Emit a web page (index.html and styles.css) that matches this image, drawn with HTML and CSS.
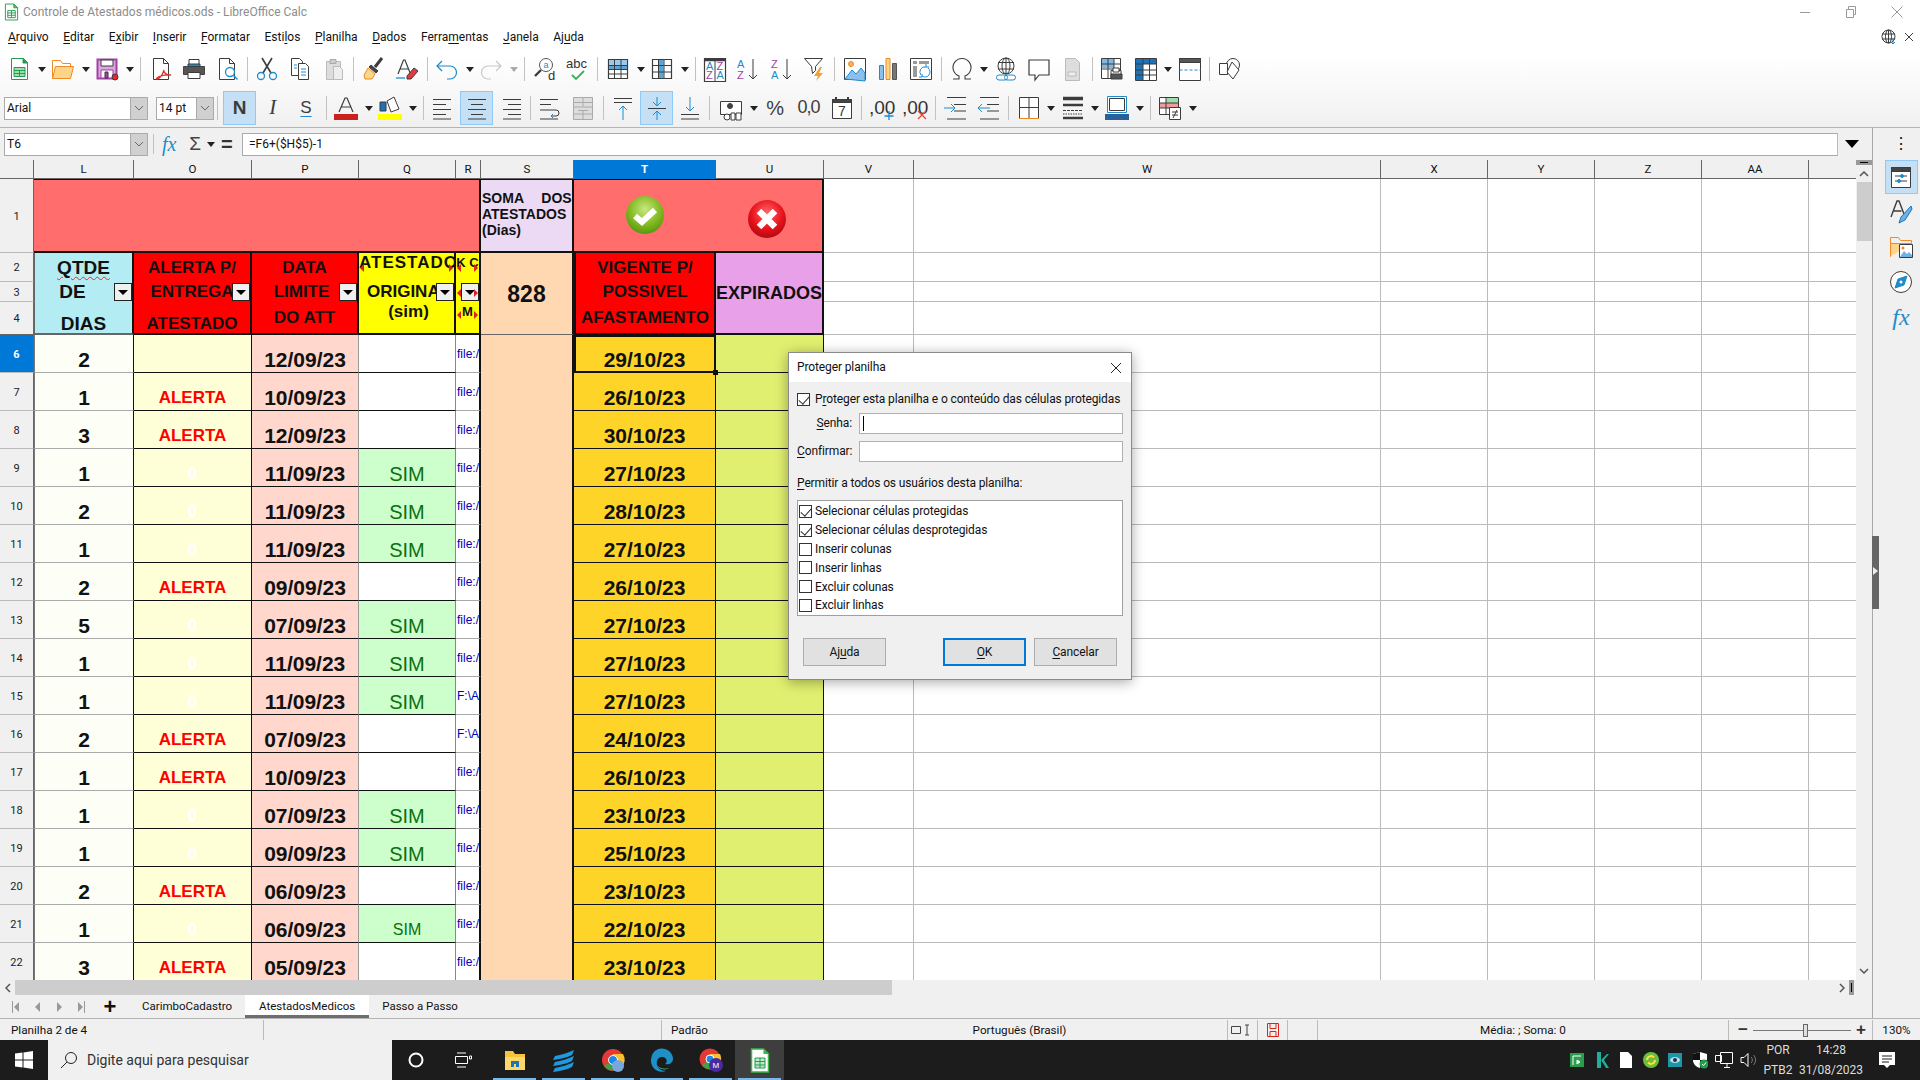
FILE: index.html
```html
<!DOCTYPE html>
<html lang="pt-BR">
<head>
<meta charset="utf-8">
<title>Controle de Atestados médicos.ods - LibreOffice Calc</title>
<link rel="stylesheet" href="styles.css">
</head>
<body>
<div class="shell">
  <header class="top">
    <div class="titlebar">
      <svg class="ic appicon" viewBox="0 0 16 18"><path d="M1.500 .5h9l4 4v13h-13z" fill="#fff" stroke="#2a9d4e"/><path d="M10.500 .5l4 4h-4z" fill="#6cc24a" stroke="#2a9d4e"/><path d="M4 7.500h8v7.500h-8zM4 10h8M4 12.500h8M8 7.500v7.500" stroke="#2a9d4e"/></svg>
      <span class="title">Controle de Atestados médicos.ods - LibreOffice Calc</span>
      <div class="winctl">
        <span class="wb"><svg class="ic" viewBox="0 0 12 12" width="12" height="12"><path d="M1 6.500h10" stroke="#999"/></svg></span>
        <span class="wb"><svg class="ic" viewBox="0 0 12 12" width="12" height="12"><path d="M1.500 3.500h7v8h-7zM3.500 3v-2.500h7v8h-2" stroke="#999"/></svg></span>
        <span class="wb"><svg class="ic" viewBox="0 0 12 12" width="12" height="12"><path d="M.5 .5l11 11M11.500 .5l-11 11" stroke="#999"/></svg></span>
      </div>
    </div>
    <div class="menubar">
      <nav class="menu">
        <span><u>A</u>rquivo</span><span><u>E</u>ditar</span><span>E<u>x</u>ibir</span><span><u>I</u>nserir</span><span><u>F</u>ormatar</span><span>Esti<u>l</u>os</span><span><u>P</u>lanilha</span><span><u>D</u>ados</span><span>Ferra<u>m</u>entas</span><span><u>J</u>anela</span><span>Aj<u>u</u>da</span>
      </nav>
      <div class="menuright">
        <svg class="ic" viewBox="0 0 16 16" width="16" height="16"><circle cx="7.500" cy="7.500" r="6.500"/><ellipse cx="7.500" cy="7.500" rx="3" ry="6.500"/><path d="M1 5h13M1 10h13M7.500 1v13"/><path d="M12 9v6M10 13l2 2 2-2" stroke="#1e8bcd"/></svg>
        <svg class="ic" viewBox="0 0 10 10" width="10" height="10"><path d="M1 1l8 8M9 1l-8 8"/></svg>
      </div>
    </div>
    <div class="tb tb1">
      <span class="b"><svg class="ic" viewBox="0 0 24 24"><path d="M4.500 1.500h12l4 4v17h-16z" fill="#fff" stroke="#1e9e4e"/><path d="M16 1.500l4.500 4.500h-4.500z" fill="#1e9e4e" stroke="#1e9e4e"/><path d="M7 10.500h11v9h-11z" fill="#9fdcae" stroke="#1e9e4e"/><path d="M7 13.500h11M7 16.500h11M12.500 13.500v6" stroke="#1e9e4e"/></svg></span><span class="dd"></span>
      <span class="b"><svg class="ic" viewBox="0 0 24 24"><path d="M1.500 21.500v-18h8l2 3h8v3" fill="#fff" stroke="#f08a24"/><path d="M1.500 21.500l3-12h18l-3 12z" fill="#fbd68a" stroke="#f08a24"/></svg></span><span class="dd"></span>
      <span class="b"><svg class="ic" viewBox="0 0 24 24"><path d="M2.500 2.500h19v19h-19z" fill="#d9a8dc" stroke="#a33fa6" stroke-width="2"/><path d="M6 3h12v6h-12z" fill="#fff"/><path d="M6 13h12v8h-12z" fill="#fff" stroke="#a33fa6"/><path d="M10 15h3v6h-3z" fill="#a33fa6"/><circle cx="20" cy="20" r="3" fill="#e8262a"/></svg></span><span class="dd"></span>
      <span class="sep"></span>
      <span class="b"><svg class="ic" viewBox="0 0 24 24"><path d="M4.500 1.500h10l5 5v16h-15z" fill="#fff"/><path d="M14.500 1.500v5h5"/><path d="M15 13c-2 6-5 9-7 9s3-5 14-4c-4 1-8-3-7-5z" stroke="#e0352b" stroke-width="1.300"/></svg></span>
      <span class="b"><svg class="ic" viewBox="0 0 24 24"><path d="M7 2.500h10v7h-10z" fill="#fff"/><path d="M1.500 9.500h21v8h-21z" fill="#555" stroke="#444"/><path d="M6 7h12v2.500h-12z" fill="#1e8bcd"/><path d="M6 15.500h12v6h-12z" fill="#fff"/></svg></span>
      <span class="b"><svg class="ic" viewBox="0 0 24 24"><path d="M4.500 1.500h10l5 5v16h-15z" fill="#fff"/><path d="M14.500 1.500v5h5"/><circle cx="15" cy="15" r="4.500" fill="#fff" stroke="#1e8bcd" stroke-width="1.300"/><path d="M18.500 18.500l4 4" stroke="#1e8bcd" stroke-width="1.500"/></svg></span>
      <span class="sep"></span>
      <span class="b"><svg class="ic" viewBox="0 0 24 24"><path d="M7 1l9 15M17 1l-9 15" stroke-width="1.600"/><circle cx="6" cy="19" r="3.500" stroke="#1e8bcd" stroke-width="1.300"/><circle cx="18" cy="19" r="3.500" stroke="#1e8bcd" stroke-width="1.300"/></svg></span>
      <span class="b"><svg class="ic" viewBox="0 0 24 24"><path d="M3.500 1.500h8l3 3v14h-11z" fill="#fff"/><path d="M10.500 6.500h7l3 3v13h-10z" fill="#fff"/><path d="M6 8h3M6 11h3M13 12h5M13 15h5M13 18h5" stroke="#1e8bcd"/></svg></span>
      <span class="b"><svg class="ic" viewBox="0 0 24 24"><path d="M4.500 4.500h14v18h-14z" fill="#ddd" stroke="#bbb"/><path d="M8 2.500h6v4h-6z" fill="#ccc" stroke="#aaa"/><path d="M11.500 9.500h6l3 3v10h-9z" fill="#eee" stroke="#bbb"/></svg></span>
      <span class="sep"></span>
      <span class="b"><svg class="ic" viewBox="0 0 24 24"><path d="M20 1L13 10" stroke-width="3"/><path d="M9 8l7 6-2 2-7-6z" fill="#444"/><path d="M6 11l7 6-3 5H3l-1-4z" fill="#fbd68a" stroke="#f08a24"/></svg></span>
      <span class="b"><svg class="ic" viewBox="0 0 24 24"><path d="M3 17L8.500 3h1.500l5.500 14M5.500 12h8" stroke-width="1.200"/><path d="M1 21h9" stroke="#1e8bcd" stroke-width="1.300"/><path d="M12 19l7-8 4 3-7 8h-4z" fill="#e8363a"/></svg></span>
      <span class="sep"></span>
      <span class="b"><svg class="ic" viewBox="0 0 24 24"><path d="M7 4L2 9l5 5M2 9h13a6 6 0 010 13h-3" stroke="#1e8bcd" stroke-width="1.200"/></svg></span><span class="dd"></span>
      <span class="b"><svg class="ic" viewBox="0 0 24 24"><path d="M17 4l5 5-5 5M22 9H9a6 6 0 000 13h3" stroke="#c8c8c8" stroke-width="1.200"/></svg></span><span class="dd off"></span>
      <span class="sep"></span>
      <span class="b"><svg class="ic" viewBox="0 0 24 24"><circle cx="13" cy="8" r="6.500" fill="#fff" stroke="#555"/><path d="M8 13l-6 6" stroke-width="2.400"/><text x="10.500" y="11" class="ti">a</text><text x="15" y="23" class="td">d</text></svg></span>
      <span class="b"><svg class="ic" viewBox="0 0 24 24"><text x="0" y="11" class="tabc">abc</text><path d="M6 18l4 4 8-8" stroke="#3fae5a" stroke-width="1.800"/></svg></span>
      <span class="sep"></span>
      <span class="b"><svg class="ic" viewBox="0 0 24 24"><path d="M2.500 2.500h19v19h-19z" fill="#fff" stroke-width="1.200"/><path d="M3 8.500h18v4h-18z" fill="#5aa5dc" stroke="none"/><path d="M3 3h18v5h-18z" fill="#9cc9eb" stroke="none"/><path d="M2.500 8.500h19M2.500 12.500h19M2.500 17h19M8.500 2.500v19M15 2.500v19"/></svg></span><span class="dd"></span>
      <span class="b"><svg class="ic" viewBox="0 0 24 24"><path d="M2.500 2.500h19v19h-19z" fill="#fff" stroke-width="1.200"/><path d="M8.500 3h5v18h-5z" fill="#5aa5dc" stroke="none"/><path d="M2.500 8.500h19M2.500 15h19M8.500 2.500v19M14 2.500v19"/></svg></span><span class="dd"></span>
      <span class="sep"></span>
      <span class="b"><svg class="ic" viewBox="0 0 24 24"><path d="M1.500 1.500h21v23h-21z" fill="#fff" stroke-width="1.200"/><path d="M1.500 3h21" stroke-width="2.500"/><path d="M12 4v20"/><text x="3" y="13" class="ta bl">A</text><text x="13.500" y="13" class="ta pu">Z</text><text x="3" y="22" class="ta pu">Z</text><text x="13.500" y="22" class="ta bl">A</text></svg></span>
      <span class="b"><svg class="ic" viewBox="0 0 24 24"><text x="1" y="11" class="ta bl">A</text><text x="1" y="22" class="ta pu">Z</text><path d="M17 2v20M13 18l4 4 4-4"/></svg></span>
      <span class="b"><svg class="ic" viewBox="0 0 24 24"><text x="1" y="11" class="ta pu">Z</text><text x="1" y="22" class="ta bl">A</text><path d="M17 2v20M13 18l4 4 4-4"/></svg></span>
      <span class="b"><svg class="ic" viewBox="0 0 24 24"><path d="M1.500 1.500h18l-7 8v4l-3 3-1-7z" fill="#fff"/><path d="M17 10l-6 9h4l-2 5 7-8h-4l3-6z" fill="#f0a030" stroke="none"/></svg></span>
      <span class="sep"></span>
      <span class="b"><svg class="ic" viewBox="0 0 24 24"><path d="M1.500 1.500h21v21h-21z" fill="#fff"/><path d="M2 22l7-9 4 4 5-6 4 5v8z" fill="#8cc0ec" stroke="#1e8bcd"/><circle cx="8" cy="7" r="2.500" fill="#f8b05a" stroke="#f08a24"/></svg></span>
      <span class="b"><svg class="ic" viewBox="0 0 24 24"><path d="M3.500 8.500h4v14h-4z" fill="#8cc0ec" stroke="#1e8bcd"/><path d="M10 1.500h4v21h-4z" fill="#fbd68a" stroke="#f08a24"/><path d="M16.500 6.500h4v16h-4z" fill="#777" stroke="#555"/></svg></span>
      <span class="b"><svg class="ic" viewBox="0 0 24 24"><path d="M1.500 1.500h21v21h-21z" fill="#fff"/><path d="M4 4h4v3h-4zM10 4h10v3h-10zM4 9h4v11h-4z" fill="#999" stroke="none"/><path d="M12 18a5 5 0 015-8M19 11a5 5 0 01-6 8M17 7v3h3M10 20h3v-3" stroke="#1e8bcd"/></svg></span>
      <span class="sep"></span>
      <span class="b"><svg class="ic" viewBox="0 0 24 24"><path d="M3 23h6v-3a9 9 0 116 0v3h6" stroke-width="1.100" transform="translate(0 -1)"/></svg></span><span class="dd"></span>
      <span class="b"><svg class="ic" viewBox="0 0 24 24"><circle cx="12" cy="9" r="8"/><ellipse cx="12" cy="9" rx="4" ry="8"/><path d="M4 5.500h16M4 12h16M12 1v16" stroke-width="1"/><path d="M5 19.500h6a2.500 2.500 0 010 5h-6a2.500 2.500 0 010-5zM13 19.500h6a2.500 2.500 0 010 5h-6a2.500 2.500 0 010-5z" stroke="#1e8bcd" fill="#fff" transform="translate(0 -1.500)"/></svg></span>
      <span class="b"><svg class="ic" viewBox="0 0 24 24"><path d="M2 3h20v15h-10l-4 5v-5h-6z" fill="#fff" stroke-width="1.200"/></svg></span>
      <span class="b"><svg class="ic" viewBox="0 0 24 24"><path d="M5.500 1.500h10l4 4v18h-14z" fill="#ddd" stroke="#bbb"/><path d="M8 15h8v4h-8z" fill="#eee" stroke="#bbb"/></svg></span>
      <span class="sep"></span>
      <span class="b"><svg class="ic" viewBox="0 0 24 24"><path d="M1.500 1.500h19v20h-19z" fill="#fff"/><path d="M2 2h12v9h-12z" fill="#7db8e6" stroke="none"/><path d="M1.500 7h19M1.500 12h19M8 1.500v20M14 1.500v20"/><path d="M11 13.500h10v8h-10z" fill="#fff"/><path d="M13 11h6v4h-6z" fill="#fff"/><path d="M11 17h11v5h-11z" fill="#555"/></svg></span>
      <span class="b"><svg class="ic" viewBox="0 0 24 24"><path d="M1.500 1.500h21v22h-21z" fill="#fff"/><path d="M2 2h7v21h-7zM9 2h13v5h-13z" fill="#1e72b8" stroke="none"/><path d="M1.500 7h21M1.500 13h21M1.500 18h21M9 1.500v22M15.500 1.500v22"/></svg></span><span class="dd"></span>
      <span class="b"><svg class="ic" viewBox="0 0 24 24"><path d="M1.500 1.500h21v22h-21z" fill="#fff"/><path d="M1.500 1.500h21v4h-21z" fill="#555"/><path d="M1.500 13h21" stroke="#1e8bcd" stroke-dasharray="3 2"/></svg></span>
      <span class="sep"></span>
      <span class="b"><svg class="ic" viewBox="0 0 24 24"><circle cx="15" cy="8" r="6.500"/><path d="M1.500 6.500h8v11h-8z" fill="#fff"/><path d="M14 5l7 8-6 9-6-7z" fill="#fff"/></svg></span>
    </div>
    <div class="tb tb2">
      <div class="combo font"><span class="val">Arial</span><span class="cbtn"><svg viewBox="0 0 10 6" width="10" height="6"><path d="M1 1l4 4 4-4" fill="none" stroke="#666"/></svg></span></div>
      <div class="combo size"><span class="val">14 pt</span><span class="cbtn"><svg viewBox="0 0 10 6" width="10" height="6"><path d="M1 1l4 4 4-4" fill="none" stroke="#666"/></svg></span></div>
      <span class="sep sep-n"></span>
      <span class="b on glyph bold">N</span>
      <span class="b glyph ital">I</span>
      <span class="b glyph under">S</span>
      <span class="sep"></span>
      <span class="b"><svg class="ic" viewBox="0 0 24 24"><path d="M5 16L11 2h2l6 14M7.500 11h9" stroke-width="1.200"/><path d="M0 18h24v6h-24z" fill="#c9211e" stroke="none"/></svg></span><span class="dd"></span>
      <span class="b"><svg class="ic" viewBox="0 0 24 24"><path d="M2 6h6v9h-6z" fill="#1e72b8"/><path d="M9 5l7-4 5 12-8 3z" fill="#fff"/><path d="M0 18h24v6h-24z" fill="#ffff00" stroke="none"/></svg></span><span class="dd"></span>
      <span class="sep"></span>
      <span class="b"><svg class="ic" viewBox="0 0 24 24"><path d="M1 3.500h18M1 8.500h13M1 13.500h18M1 18.500h13M1 23h18"/></svg></span>
      <span class="b on"><svg class="ic" viewBox="0 0 24 24"><path d="M3 3.500h18M6 8.500h12M3 13.500h18M6 18.500h12M3 23h18"/></svg></span>
      <span class="b"><svg class="ic" viewBox="0 0 24 24"><path d="M5 3.500h18M10 8.500h13M5 13.500h18M10 18.500h13M5 23h18"/></svg></span>
      <span class="sep"></span>
      <span class="b"><svg class="ic" viewBox="0 0 24 24"><path d="M2 3.500h18M2 8.500h11M2 23h18M2 14h16a3 3 0 010 6h-5" /><path d="M15 18l-2 2 2 2" stroke="#1e8bcd"/></svg></span>
      <span class="b"><svg class="ic" viewBox="0 0 24 24"><path d="M2.500 1.500h19v22h-19z" fill="#ddd" stroke="#aaa"/><path d="M2.500 6.500h19M2.500 11h19M2.500 18h19M12 1.500v9M12 14v9M7 14.500h10" stroke="#aaa"/></svg></span>
      <span class="sep"></span>
      <span class="b"><svg class="ic" viewBox="0 0 24 24"><path d="M3 2.500h18M3 6.500h18"/><path d="M12 10v14M8 14l4-4 4 4" stroke="#1e8bcd"/></svg></span>
      <span class="b on"><svg class="ic" viewBox="0 0 24 24"><path d="M3 12.500h18"/><path d="M12 1v9M8 6l4 4 4-4M12 24v-9M8 19l4-4 4 4" stroke="#1e8bcd"/></svg></span>
      <span class="b"><svg class="ic" viewBox="0 0 24 24"><path d="M3 18.500h18M3 23h18"/><path d="M12 1v14M8 11l4 4 4-4" stroke="#1e8bcd"/></svg></span>
      <span class="sep sep-c"></span>
      <span class="b"><svg class="ic" viewBox="0 0 24 24"><path d="M1.500 5.500h21v13h-21z" fill="#fff"/><circle cx="11" cy="10" r="2.500" fill="#444"/><circle cx="8" cy="21" r="3" fill="#fff"/><path d="M12 17h4v7h-4zM17 17h5v7h-5z" fill="#fff"/></svg></span><span class="dd"></span>
      <span class="b glyph pct">%</span>
      <span class="b glyph num">0,0</span>
      <span class="b"><svg class="ic" viewBox="0 0 24 24"><path d="M2.500 3.500h19v19h-19z" fill="#fff"/><path d="M2.500 3.500h19v3h-19z" fill="#444"/><path d="M6 1v3M18 1v3" stroke-width="2"/><text x="8" y="20" class="t7">7</text></svg></span>
      <span class="sep"></span>
      <span class="b wide"><svg class="ic" viewBox="0 0 26 24"><text x="0" y="18" class="tnum">,00</text><path d="M20 15v9M15.500 20h9" stroke="#1e8bcd" stroke-width="1.300"/></svg></span>
      <span class="b wide"><svg class="ic" viewBox="0 0 26 24"><text x="0" y="18" class="tnum">,00</text><path d="M16 15l8 8M24 15l-8 8" stroke="#e8453a" stroke-width="1.300"/></svg></span>
      <span class="sep"></span>
      <span class="b"><svg class="ic" viewBox="0 0 24 24"><path d="M4 1.500h19M11 8.500h12M11 15h12M4 23h19"/><path d="M1 12h11M8 8l4 4-4 4" stroke="#1e8bcd"/></svg></span>
      <span class="b"><svg class="ic" viewBox="0 0 24 24"><path d="M4 1.500h19M11 8.500h12M11 15h12M4 23h19"/><path d="M13 12h-11M5 8l-4 4 4 4" stroke="#1e8bcd" transform="translate(1 0)"/></svg></span>
      <span class="sep"></span>
      <span class="b"><svg class="ic" viewBox="0 0 24 24"><path d="M2.500 1.500h19v21h-19z" fill="#fff"/><path d="M2.500 11.500h19M12 1.500v21"/><path d="M2 22.500h20" stroke="#f08a24"/></svg></span><span class="dd"></span>
      <span class="b"><svg class="ic" viewBox="0 0 24 24"><path d="M2 2.500h20" stroke-width="3.500"/><path d="M2 9h20" stroke-width="2.500"/><path d="M2 14.500h20" stroke-dasharray="3 1"/><path d="M2 18h20" stroke-dasharray="1.500 1"/><path d="M2 22h20" stroke-width="2.500"/></svg></span><span class="dd"></span>
      <span class="b"><svg class="ic" viewBox="0 0 24 24"><path d="M2.500 .5h19v16h-19z" fill="#fff" stroke="#1e8bcd"/><path d="M4.500 2.500h15v12h-15z"/><path d="M0 18h24v6h-24z" fill="#2a6099" stroke="none"/></svg></span><span class="dd"></span>
      <span class="sep"></span>
      <span class="b"><svg class="ic" viewBox="0 0 24 24"><path d="M1.500 1.500h19v17h-19z" fill="#fff"/><path d="M8 2h12v5h-12z" fill="#9fdcae" stroke="none"/><path d="M8 7h12v5h-12z" fill="#f39a9a" stroke="none"/><path d="M2 7h6v5h-6z" fill="#f39a9a" stroke="none"/><path d="M1.500 7h19M1.500 12h19M8 1.500v17"/><path d="M11.500 11.500h11v12h-11z" fill="#fff"/><path d="M14 16h6M14 19h6M19 14l-4 8"/></svg></span><span class="dd"></span>
    </div>
  </header>

  <div class="work">
    <div class="main">
      <div class="fbar">
        <div class="combo name"><span class="val">T6</span><span class="cbtn"><svg viewBox="0 0 10 6" width="10" height="6"><path d="M1 1l4 4 4-4" fill="none" stroke="#666"/></svg></span></div>
        <span class="sep fsep"></span>
        <span class="fx">fx</span>
        <span class="sigma">Σ</span>
        <span class="dd fdd"></span>
        <span class="eq">=</span>
        <div class="finput">=F6+($H$5)-1</div>
        <span class="fdrop"></span>
      </div>
      <div class="sheetrow">
        <div class="sheet">
          <div class="corner"></div><div class="ch">L</div><div class="ch">O</div><div class="ch">P</div><div class="ch">Q</div><div class="ch">R</div><div class="ch">S</div><div class="ch act">T</div><div class="ch">U</div><div class="ch">V</div><div class="ch">W</div><div class="ch">X</div><div class="ch">Y</div><div class="ch">Z</div><div class="ch">AA</div><div class="ch last"></div>

          <div class="rh">1</div>
          <div class="h1a"></div>
          <div class="h1s"><span>SOMA DOS</span> ATESTADOS (Dias)</div>
          <div class="h1t">
            <svg class="ball okb" viewBox="0 0 40 40"><defs><radialGradient id="gg" cx=".5" cy=".35" r=".7"><stop offset="0" stop-color="#c9e880"/><stop offset=".6" stop-color="#7fb81e"/><stop offset="1" stop-color="#4f8f10"/></radialGradient></defs><circle cx="20" cy="20" r="19" fill="url(#gg)"/><path d="M10 21l7 6 13-12" fill="none" stroke="#fff" stroke-width="6"/></svg>
            <svg class="ball nob" viewBox="0 0 40 40"><defs><radialGradient id="gr" cx=".5" cy=".35" r=".7"><stop offset="0" stop-color="#ff6a6a"/><stop offset=".6" stop-color="#e8101a"/><stop offset="1" stop-color="#a40a10"/></radialGradient></defs><circle cx="20" cy="20" r="19" fill="url(#gr)"/><path d="M12 12l16 16M28 12l-16 16" fill="none" stroke="#fff" stroke-width="6.500"/></svg>
          </div>
          <div class="blank"></div>

          <div class="rh">2</div>
          <div class="hd hl"><span class="ln wavy">QTDE</span><span class="ln sh-l">DE</span><span class="ln end">DIAS</span><i class="af"></i></div>
          <div class="hd hr"><span class="ln">ALERTA P/</span><span class="ln">ENTREGA</span><span class="ln end">ATESTADO</span><i class="af"></i></div>
          <div class="hd hr"><span class="ln">DATA</span><span class="ln sh-l2">LIMITE</span><span class="ln">DO ATT</span><i class="af"></i></div>
          <div class="hd hy"><span class="ln up wide-l">ATESTADO</span><span class="ln">ORIGINAL</span><span class="ln up2">(sim)</span><i class="af"></i><i class="tl t1"></i><i class="tr t1"></i></div>
          <div class="hd hy hs"><span class="ln up">K C</span><span class="ln">st</span><span class="ln up2">M</span><i class="af"></i><i class="tl t1"></i><i class="tr t1"></i><i class="tl t2"></i><i class="tr t2"></i><i class="tl t3"></i><i class="tr t3"></i></div>
          <div class="h828">828</div>
          <div class="hd hr ht"><span class="ln">VIGENTE P/</span><span class="ln">POSSIVEL</span><span class="ln">AFASTAMENTO</span></div>
          <div class="hexp">EXPIRADOS</div>
          <div class="blank"></div>
          <div class="rh">3</div><div class="blank"></div>
          <div class="rh rh4">4</div><div class="blank"></div>

          <div class="rh act">6</div><div class="c l">2</div><div class="c o"></div><div class="c p">12/09/23</div><div class="c q"></div><div class="c r">file:/</div><div class="smerge"></div><div class="c t cur">29/10/23<i class="handle"></i></div><div class="c u"></div><div class="blank"></div>
          <div class="rh">7</div><div class="c l">1</div><div class="c o">ALERTA</div><div class="c p">10/09/23</div><div class="c q"></div><div class="c r">file:/</div><div class="c t">26/10/23</div><div class="c u"></div><div class="blank"></div>
          <div class="rh">8</div><div class="c l">3</div><div class="c o">ALERTA</div><div class="c p">12/09/23</div><div class="c q"></div><div class="c r">file:/</div><div class="c t">30/10/23</div><div class="c u"></div><div class="blank"></div>
          <div class="rh">9</div><div class="c l">1</div><div class="c o z">0</div><div class="c p">11/09/23</div><div class="c q s">SIM</div><div class="c r">file:/</div><div class="c t">27/10/23</div><div class="c u"></div><div class="blank"></div>
          <div class="rh">10</div><div class="c l">2</div><div class="c o z">0</div><div class="c p">11/09/23</div><div class="c q s">SIM</div><div class="c r">file:/</div><div class="c t">28/10/23</div><div class="c u"></div><div class="blank"></div>
          <div class="rh">11</div><div class="c l">1</div><div class="c o z">0</div><div class="c p">11/09/23</div><div class="c q s">SIM</div><div class="c r">file:/</div><div class="c t">27/10/23</div><div class="c u"></div><div class="blank"></div>
          <div class="rh">12</div><div class="c l">2</div><div class="c o">ALERTA</div><div class="c p">09/09/23</div><div class="c q"></div><div class="c r">file:/</div><div class="c t">26/10/23</div><div class="c u"></div><div class="blank"></div>
          <div class="rh">13</div><div class="c l">5</div><div class="c o z">0</div><div class="c p">07/09/23</div><div class="c q s">SIM</div><div class="c r">file:/</div><div class="c t">27/10/23</div><div class="c u"></div><div class="blank"></div>
          <div class="rh">14</div><div class="c l">1</div><div class="c o z">0</div><div class="c p">11/09/23</div><div class="c q s">SIM</div><div class="c r">file:/</div><div class="c t">27/10/23</div><div class="c u"></div><div class="blank"></div>
          <div class="rh">15</div><div class="c l">1</div><div class="c o z">0</div><div class="c p">11/09/23</div><div class="c q s">SIM</div><div class="c r">F:\A</div><div class="c t">27/10/23</div><div class="c u"></div><div class="blank"></div>
          <div class="rh">16</div><div class="c l">2</div><div class="c o">ALERTA</div><div class="c p">07/09/23</div><div class="c q"></div><div class="c r">F:\A</div><div class="c t">24/10/23</div><div class="c u"></div><div class="blank"></div>
          <div class="rh">17</div><div class="c l">1</div><div class="c o">ALERTA</div><div class="c p">10/09/23</div><div class="c q"></div><div class="c r">file:/</div><div class="c t">26/10/23</div><div class="c u"></div><div class="blank"></div>
          <div class="rh">18</div><div class="c l">1</div><div class="c o z">0</div><div class="c p">07/09/23</div><div class="c q s">SIM</div><div class="c r">file:/</div><div class="c t">23/10/23</div><div class="c u"></div><div class="blank"></div>
          <div class="rh">19</div><div class="c l">1</div><div class="c o z">0</div><div class="c p">09/09/23</div><div class="c q s">SIM</div><div class="c r">file:/</div><div class="c t">25/10/23</div><div class="c u"></div><div class="blank"></div>
          <div class="rh">20</div><div class="c l">2</div><div class="c o">ALERTA</div><div class="c p">06/09/23</div><div class="c q"></div><div class="c r">file:/</div><div class="c t">23/10/23</div><div class="c u"></div><div class="blank"></div>
          <div class="rh">21</div><div class="c l">1</div><div class="c o z">0</div><div class="c p">06/09/23</div><div class="c q s small">SIM</div><div class="c r">file:/</div><div class="c t">22/10/23</div><div class="c u"></div><div class="blank"></div>
          <div class="rh">22</div><div class="c l">3</div><div class="c o">ALERTA</div><div class="c p">05/09/23</div><div class="c q"></div><div class="c r">file:/</div><div class="c t">23/10/23</div><div class="c u"></div><div class="blank"></div>
        </div>
        <div class="vscroll">
          <span class="mark"></span>
          <svg class="arrow" viewBox="0 0 10 6" width="10" height="6"><path d="M1 5l4-4 4 4" fill="none" stroke="#555" stroke-width="1.500"/></svg>
          <span class="vthumb"></span>
          <svg class="arrow vdown" viewBox="0 0 10 6" width="10" height="6"><path d="M1 1l4 4 4-4" fill="none" stroke="#555" stroke-width="1.500"/></svg>
        </div>
      </div>
      <div class="hscroll">
        <svg class="arrowh" viewBox="0 0 6 10" width="6" height="10"><path d="M5 1l-4 4 4 4" fill="none" stroke="#555" stroke-width="1.500"/></svg>
        <span class="hthumb"></span>
        <svg class="arrowh hright" viewBox="0 0 6 10" width="6" height="10"><path d="M1 1l4 4-4 4" fill="none" stroke="#555" stroke-width="1.500"/></svg>
        <span class="hmark"></span>
      </div>
      <div class="tabs">
        <span class="nav"><i class="bar"></i><i class="tri-l"></i></span>
        <span class="nav"><i class="tri-l"></i></span>
        <span class="nav"><i class="tri-r"></i></span>
        <span class="nav"><i class="tri-r"></i><i class="bar"></i></span>
        <span class="plus">+</span>
        <span class="tab">CarimboCadastro</span>
        <span class="tab sel">AtestadosMedicos</span>
        <span class="tab">Passo a Passo</span>
      </div>
    </div>
    <aside class="side">
      <span class="kebab">⋮</span>
      <span class="sb on"><svg class="ic" viewBox="0 0 24 24"><path d="M2.500 2.500h19v20h-19z" fill="#fff"/><path d="M2.500 2.500h19v4h-19z" fill="#444"/><path d="M6 11h12M6 16h12" /><circle cx="13" cy="11" r="1.500" fill="#1e8bcd" stroke="#1e8bcd"/><circle cx="10" cy="16" r="1.500" fill="#1e8bcd" stroke="#1e8bcd"/></svg></span>
      <span class="sb"><svg class="ic" viewBox="0 0 24 24"><path d="M2 17L8 1h2l5 13M4.500 11h8" stroke-width="1.400"/><path d="M22 6L12 17l-2 6 6-3L23 9z" fill="#6cb2e8" stroke="#1e72b8"/></svg></span>
      <span class="sb"><svg class="ic" viewBox="0 0 24 24"><path d="M1.500 21.500v-19h8l2 3h11v3" stroke="#f08a24"/><path d="M1.500 21.500v-13h21" fill="#fbd68a" stroke="#f08a24"/><path d="M10.500 9.500h13v13h-13z" fill="#fff"/><path d="M11 22l4-6 3 3 2-2 3 3v2z" fill="#6cb2e8" stroke="none"/><circle cx="14" cy="13" r="1.500" fill="#f08a24" stroke="none"/></svg></span>
      <span class="sb"><svg class="ic" viewBox="0 0 24 24"><circle cx="12" cy="12" r="10.500" fill="#fff"/><path d="M18 6l-3 9-9 3 3-9z" fill="#1e8bcd" stroke="#1e8bcd"/><circle cx="12" cy="12" r="1.500" fill="#fff" stroke="none"/></svg></span>
      <span class="sb fxs">fx</span>
      <i class="grip"></i>
    </aside>
  </div>

  <footer class="status">
    <span class="st st1">Planilha 2 de 4</span>
    <span class="st st1b"></span>
    <span class="st st2">Padrão</span>
    <span class="st st3">Português (Brasil)</span>
    <span class="st st4"><svg class="ic" viewBox="0 0 24 12" width="24" height="12"><path d="M.5 2.500h9v7h-9zM14 1h4M16 1v10M14 11h4" stroke="#444"/></svg></span>
    <span class="st st5"><svg class="ic" viewBox="0 0 12 14" width="12" height="14"><path d="M.5 .5h11v13h-11z" stroke="#d8261e"/><path d="M3 .5v5h6v-5M3 13.500v-5h6v5" stroke="#d8261e"/></svg></span>
    <span class="st st6"></span>
    <span class="st st7">Média: ; Soma: 0</span>
    <span class="st st8"><span class="zm">−</span><span class="slider"><i></i></span><span class="zm">+</span></span>
    <span class="st st9">130%</span>
  </footer>

  <div class="taskbar">
    <span class="tk win"><svg viewBox="0 0 18 18" width="18" height="18"><path d="M0 2.500l7.500-1v7h-7.500zM8.500 1.400l9.500-1.400v8.500h-9.500zM0 9.500h7.500v7l-7.500-1zM8.500 9.500h9.500v8.500l-9.500-1.400z" fill="#fff"/></svg></span>
    <div class="search"><svg viewBox="0 0 18 18" width="18" height="18"><circle cx="11" cy="7" r="5.500" fill="none" stroke="#222"/><path d="M7 11l-6 6" stroke="#222"/></svg><span>Digite aqui para pesquisar</span></div>
    <span class="tk t48"><svg viewBox="0 0 18 18" width="18" height="18"><circle cx="9" cy="9" r="6.500" fill="none" stroke="#fff" stroke-width="2"/></svg></span>
    <span class="tk t48"><svg viewBox="0 0 18 18" width="18" height="18"><path d="M3 2h9M3 16h9M1.500 5.500h12v7h-12zM15.500 5h2v3h-2z" fill="none" stroke="#fff"/></svg></span>
    <span class="tk tapp first"><svg viewBox="0 0 24 24" width="24" height="24"><path d="M2 3h8l2 3h10v16h-20z" fill="#f8c33c"/><path d="M2 9h20v13h-20z" fill="#fbd968"/><path d="M8 13h8v6h-3v-3h-2v3h-3z" fill="#1e72b8"/></svg></span>
    <span class="tk tapp"><svg viewBox="0 0 24 24" width="24" height="24"><path d="M3 8c6-1 13-3 19-6l-2 5c-6 3-12 4-19 5zM3 14c6-1 13-3 19-6l-2 5c-6 3-12 4-19 5zM3 20c6-1 13-3 19-6l-2 5c-6 3-12 4-19 5z" fill="#1e9ae0"/></svg></span>
    <span class="tk tapp"><svg viewBox="0 0 24 24" width="24" height="24"><circle cx="12" cy="12" r="11" fill="#e53935"/><path d="M12 12L3 18a11 11 0 0016 2z" fill="#43a047"/><path d="M12 12l8 8a11 11 0 002-14H12z" fill="#fbc02d"/><circle cx="12" cy="12" r="4.500" fill="#1e88e5" stroke="#fff"/><circle cx="17" cy="18" r="6" fill="#7aa6dc"/></svg></span>
    <span class="tk tapp"><svg viewBox="0 0 24 24" width="24" height="24"><path d="M1 12a11 11 0 0122-1c0 4-4 6-8 5 3-2 2-7-3-7-4 0-6 4-5 8 1 3 4 6 9 6A11 11 0 011 12z" fill="#1e90c8"/><path d="M7 17c2 4 8 6 12 3-4 2-10 0-12-3z" fill="#4fd08a"/></svg></span>
    <span class="tk tapp"><svg viewBox="0 0 24 24" width="24" height="24"><circle cx="11" cy="11" r="10.500" fill="#e53935"/><path d="M11 11L3 17a10.500 10.500 0 0015 2z" fill="#43a047"/><path d="M11 11l7 8a10.500 10.500 0 003-13H11z" fill="#fbc02d"/><circle cx="11" cy="11" r="4" fill="#1e88e5" stroke="#fff"/><circle cx="17" cy="17" r="7" fill="#4a2aa0"/><text x="13.500" y="20" class="tm">M</text></svg></span>
    <span class="tk tapp active"><svg viewBox="0 0 24 24" width="24" height="26"><path d="M3.500 1h12l5 5v18h-17z" fill="#fff" stroke="#3ab54a" stroke-width="1.500"/><path d="M15.500 1l5 5h-5z" fill="#3ab54a"/><path d="M7 10h10v10h-10z" fill="#bfe8c5" stroke="#1e9e4e"/><path d="M7 13.500h10M7 17h10M12 10v10" stroke="#1e9e4e" fill="none"/></svg></span>
    <span class="spring"></span>
    <span class="tray"><svg viewBox="0 0 16 16" width="16" height="18"><path d="M1 1h14v14h-14z" fill="#2a9d4e"/><path d="M4 4h8M4 4v9M8 8l3 2-3 2z" stroke="#fff" fill="#fff"/></svg></span>
    <span class="tray"><svg viewBox="0 0 16 18" width="16" height="20"><path d="M3 1h4v16h-4zM7 9l6-6h2l-5 6 5 8h-3z" fill="#1fae9a"/></svg></span>
    <span class="tray"><svg viewBox="0 0 14 18" width="14" height="20"><path d="M1 1h8l4 4v12h-12z" fill="#fff"/></svg></span>
    <span class="tray"><svg viewBox="0 0 16 16" width="16" height="16"><circle cx="8" cy="8" r="8" fill="#6cbf3c"/><path d="M4 8a4 4 0 017-2.500M12 8a4 4 0 01-7 2.500" stroke="#ffe14a" stroke-width="2" fill="none"/></svg></span>
    <span class="tray"><svg viewBox="0 0 16 16" width="16" height="16"><path d="M1 1h14v14h-14z" fill="#1a98a8"/><ellipse cx="8" cy="8" rx="5" ry="3" fill="#bde"/><circle cx="8" cy="8" r="2" fill="#234"/></svg></span>
    <span class="tray"><svg viewBox="0 0 16 18" width="16" height="20"><path d="M8 1l7 2v6c0 4-3 7-7 8-4-1-7-4-7-8v-6z" fill="#fff"/><path d="M8 1v8H1v-6z" fill="#111"/><path d="M8 9h7c0 4-3 7-7 8z" fill="#111"/><circle cx="12" cy="13" r="4.500" fill="#1fa04a"/><path d="M10 13l1.500 1.500 2.500-3" stroke="#fff" fill="none"/></svg></span>
    <span class="tray"><svg viewBox="0 0 18 18" width="18" height="18"><path d="M5.500 1.500h12v11h-12zM9 16.500h6M12 12.500v4M.5 4.500h6v6h-6z" fill="#1a1a1a" stroke="#fff"/></svg></span>
    <span class="tray"><svg viewBox="0 0 18 16" width="18" height="16"><path d="M1 5.500h3l4-4v13l-4-4h-3z" fill="none" stroke="#fff"/><path d="M11 5a4 4 0 010 6M13.500 3a7 7 0 010 10" stroke="#777" fill="none"/></svg></span>
    <span class="lang"><span>POR</span><span>PTB2</span></span>
    <span class="clock"><span>14:28</span><span>31/08/2023</span></span>
    <span class="notif"><svg viewBox="0 0 18 18" width="18" height="18"><path d="M1 1h16v13h-5l-3 3-3-3h-5z" fill="#fff"/><path d="M4 5h10M4 8h10M4 11h7" stroke="#1a1a1a"/></svg></span>
  </div>
</div>

<section class="dialog">
  <div class="dtitle"><span>Proteger planilha</span><svg viewBox="0 0 12 12" width="12" height="12"><path d="M1 1l10 10M11 1l-10 10" stroke="#222" fill="none"/></svg></div>
  <div class="dbody">
    <label class="chk top1"><i class="box on"></i><span>P<u>r</u>oteger esta planilha e o conteúdo das células protegidas</span></label>
    <div class="fld"><span><u>S</u>enha:</span><div class="inp"><i class="caret"></i></div></div>
    <div class="fld f2"><span><u>C</u>onfirmar:</span><div class="inp"></div></div>
    <div class="lbl"><u>P</u>ermitir a todos os usuários desta planilha:</div>
    <div class="list">
      <label class="chk"><i class="box on"></i><span>Selecionar células protegidas</span></label>
      <label class="chk"><i class="box on"></i><span>Selecionar células desprotegidas</span></label>
      <label class="chk"><i class="box"></i><span>Inserir colunas</span></label>
      <label class="chk"><i class="box"></i><span>Inserir linhas</span></label>
      <label class="chk"><i class="box"></i><span>Excluir colunas</span></label>
      <label class="chk"><i class="box"></i><span>Excluir linhas</span></label>
    </div>
    <div class="btns">
      <span class="btn">Aj<u>u</u>da</span>
      <span class="btn def"><u>O</u>K</span>
      <span class="btn"><u>C</u>ancelar</span>
    </div>
  </div>
</section>
</body>
</html>
```
FILE: styles.css
```css
* { box-sizing: border-box; }
html, body { margin: 0; height: 100%; overflow: hidden; }
body { font: 12px/1.2 Roboto, sans-serif; color: #111; background: #f0f0f0; position: relative; }
i { display: block; font-style: normal; }
u { text-underline-offset: 2px; }
.shell { width: 1920px; height: 1080px; display: flex; flex-direction: column; }

.ic { fill: none; stroke: #3c3c3c; stroke-width: 1; overflow: visible; }
.ic text { stroke: none; font-family: "Liberation Sans", sans-serif; }
.ti { font-size: 9px; fill: #1e8bcd; }
.td { font-size: 13px; fill: #333; }
.tabc { font-size: 13px; fill: #333; }
.ta { font-size: 11px; }
.bl { fill: #1e8bcd; }
.pu { fill: #a33fa6; }
.t7 { font-size: 14px; fill: #333; }
.tnum { font-size: 19px; fill: #333; }
.tm { font-size: 8px; fill: #fff; font-family: "Liberation Sans", sans-serif; }

.top { height: 128px; background: linear-gradient(#fff 45%, #f0f0f0 100%); border-bottom: 1px solid #b4b4b4; flex: none; }
.titlebar { height: 24px; display: flex; align-items: center; padding-left: 4px; }
.appicon { width: 15px; height: 18px; }
.title { margin-left: 4px; color: #8c8c8c; font-size: 12px; }
.winctl { margin-left: auto; display: flex; }
.wb { width: 46px; height: 24px; display: flex; align-items: center; justify-content: center; }
.menubar { height: 26px; display: flex; align-items: center; padding-left: 8px; }
.menu { display: flex; gap: 14.600px; }
.menuright { margin-left: auto; padding-right: 6px; display: flex; gap: 7px; align-items: center; }

.tb { display: flex; align-items: center; }
.tb1 { height: 38px; padding-left: 2.500px; }
.tb2 { height: 39px; padding: 1px 0 0 4px; }
.b { width: 33.200px; height: 34px; flex: none; display: flex; align-items: center; justify-content: center; }
.b .ic { width: 24px; height: 24px; }
.b.wide .ic { width: 26px; }
.b.on { background: #c5dff5; border: 1px solid #90c8f6; }
.dd { width: 13px; height: 34px; margin-right: -2px; flex: none; position: relative; }
.dd::after { content: ""; position: absolute; left: 2px; top: 15px; border: 4.500px solid transparent; border-top: 5px solid #222; border-bottom: 0; }
.dd.off::after { border-top-color: #aaa; }
.sep { width: 7px; height: 24px; flex: none; position: relative; }
.sep::after { content: ""; position: absolute; left: 3px; top: 0; bottom: 0; width: 1px; background: #c2c2c2; }
.dd + .sep { margin-left: 2px; }
.sep-n { margin-right: 2px; }
.sep-c { margin-right: 1px; }
.glyph { font-family: "Liberation Sans", sans-serif; color: #3c3c3c; }
.bold { font-size: 19px; font-weight: 700; }
.ital { font-family: "Liberation Serif", serif; font-style: italic; font-size: 21px; }
.under { font-size: 17px; text-decoration: underline; text-decoration-color: #1e8bcd; text-underline-offset: 3px; }
.pct { font-size: 20px; }
.num { font-size: 18px; letter-spacing: -1px; }

.combo { display: flex; height: 23px; background: #fff; border: 1px solid #aaa; flex: none; }
.combo .val { flex: 1; padding-left: 2px; line-height: 21px; font-size: 12px; }
.cbtn { width: 17px; background: #d0d0d0; border-left: 1px solid #aaa; display: flex; align-items: center; justify-content: center; }
.font { width: 144px; }
.size { width: 58px; margin-left: 8px; }

.work { flex: none; height: 890px; display: flex; }
.main { width: 1872px; display: flex; flex-direction: column; }
.fbar { height: 32px; display: flex; align-items: center; padding-left: 4px; background: #f0f0f0; position: relative; flex: none; }
.name { width: 144px; }
.fsep { height: 20px; margin-left: 2px; }
.fx { font: italic 20px "Liberation Serif", serif; color: #1e8bcd; margin-left: 5px; width: 24px; }
.sigma { font: 19px "Liberation Sans", sans-serif; color: #444; width: 18px; text-align: center; }
.fdd { margin-left: 1px; }
.eq { font: 700 20px "Liberation Sans", sans-serif; color: #333; margin-left: 5px; width: 22px; }
.finput { width: 1596px; height: 23px; background: #fff; border: 1px solid #aaa; border-right-color: #bbb; padding-left: 6px; line-height: 21px; font-size: 12px; margin-left: -1px; }
.fdrop { margin-left: 7px; border: 7px solid transparent; border-top: 8px solid #000; border-bottom: 0; }

.sheetrow { height: 820px; display: flex; flex: none; }
.sheet { width: 1856px; height: 820px; overflow: hidden; background: #fff; display: grid; position: relative;
  grid-template-columns: 34px 100px 118px 107px 97px 25px 93px 142px 108px 90px 467px 107px 107px 107px 107px 47px;
  grid-template-rows: 19px 74px 29px 20px 33px repeat(17, 38px); }
.corner { background: #f0f0f0; border-bottom: 1px solid #666; border-right: 1px solid #666; }
.ch { background: #f0f0f0; border-bottom: 1px solid #666; border-right: 1px solid #666; text-align: center; line-height: 18px; font-size: 11.500px; }
.ch.last { border-right: 0; }
.ch.act { background: #0078d7; color: #fff; font-weight: 700; border-color: #0078d7; }
.rh { grid-column: 1; background: #f0f0f0; border-bottom: 1px solid #bbb; border-right: 1px solid #666; display: flex; align-items: center; justify-content: center; padding-top: 2px; font-size: 11px; color: #222; }
.rh.act { background: #0078d7; color: #fff; font-weight: 700; }
.rh4 { border-bottom-color: #666; }
.blank { grid-column: 10 / span 7; border-bottom: 1px solid #bbb; background-repeat: no-repeat;
  background-image: linear-gradient(#bbb, #bbb), linear-gradient(#bbb, #bbb), linear-gradient(#bbb, #bbb), linear-gradient(#bbb, #bbb), linear-gradient(#bbb, #bbb), linear-gradient(#bbb, #bbb);
  background-size: 1px 100%;
  background-position: 89px 0, 556px 0, 663px 0, 770px 0, 877px 0, 984px 0; }

.h1a { grid-column: span 5; background: #ff6d6d; border: 2px solid #111; border-left-width: 0; border-top-width: 1px; }
.h1s { background: #ecdaf4; border: 2px solid #111; border-width: 1px 2px 2px 0; font: 700 14px/16px "Liberation Sans", sans-serif; padding: 10px 1px 0 1px; }
.h1s span { display: block; word-spacing: 14px; white-space: nowrap; }
.h1t { grid-column: span 2; background: #ff6d6d; border: 2px solid #111; border-width: 1px 2px 2px 0; position: relative; }
.ball { position: absolute; width: 40px; height: 40px; }
.okb { left: 51px; top: 15px; }
.nob { left: 173px; top: 19px; }

.hd { grid-row: span 3; display: grid; grid-template-rows: 29px 20px 32px; justify-items: center; align-items: center; position: relative; overflow: hidden;
  font: 700 17px/20px "Liberation Sans", sans-serif; border-right: 2px solid #111; border-bottom: 2px solid #111; }
.ln { white-space: nowrap; }
.hl { background: #b4ecf4; font-size: 19px; border-left: 1px solid #666; border-bottom-color: #666; }
.hr { background: #f00; }
.hy { background: #ff0; }
.hs { font-size: 13px; }
.ht { border-left: 2px solid #111; }
.end { align-self: end; }
.sh-l { margin-right: 22px; }
.sh-l2 { margin-right: 6px; }
.up { transform: translateY(-5px); }
.up2 { transform: translateY(-6px); }
.wide-l { letter-spacing: 1px; }
.wavy { text-decoration: underline wavy #d6342c 1px; text-underline-offset: 2px; }
.af { position: absolute; right: 0; top: 30px; width: 18px; height: 18px; background: #f0f0f0; border: 1px solid #222; }
.af::after { content: ""; position: absolute; left: 3px; top: 6px; border: 5px solid transparent; border-top: 5px solid #000; border-bottom: 0; }
.tl, .tr { position: absolute; width: 0; height: 0; border: 4px solid transparent; }
.tl { left: 1px; border-right: 4px solid #e0201c; border-left: 0; }
.tr { right: 1px; border-left: 4px solid #e0201c; border-right: 0; }
.t1 { top: 11px; }
.t2 { top: 36px; }
.t3 { top: 58px; }
.h828 { grid-row: span 3; background: #ffd8b2; border-right: 2px solid #111; border-bottom: 1px solid #666; display: flex; align-items: center; justify-content: center; padding-top: 2px; font: 700 23px "Liberation Sans", sans-serif; }
.hexp { grid-row: span 3; background: #e8a0e8; border-right: 2px solid #111; border-bottom: 2px solid #111; display: flex; align-items: center; justify-content: center; font: 700 18px "Liberation Sans", sans-serif; }

.c { display: flex; align-items: flex-end; justify-content: center; font: 700 21px/24px "Liberation Sans", sans-serif; border-right: 1px solid #111; border-bottom: 1px solid #111; overflow: hidden; position: relative; }
.l { background: #fdfff6; border-bottom-color: #aaa; border-left: 1px solid #777; }
.o { background: #ffffd7; color: #f00; font-size: 17px; }
.o.z { color: #fff; }
.p { background: #ffd7cc; border-right-color: #999; }
.q { background: #fff; border-right-color: #888; }
.q.s { background: #ccffcc; color: #0f6f0f; font-weight: 400; font-size: 20px; }
.q.s.small { font-size: 16px; }
.r { background: #fff; color: #0000b4; font-weight: 400; font-size: 12px; line-height: 14px; align-items: center; justify-content: flex-start; padding-left: 1px; border-right: 2px solid #111; border-bottom-color: #aaa; white-space: nowrap; }
.smerge { grid-column: 7; grid-row: span 17; background: #ffd8b2; border-right: 2px solid #111; }
.t { background: #ffd428; border-right: 1px solid #111; }
.u { background: #e0ef6f; border-right: 1px solid #111; }
.cur { overflow: visible; outline: 2px solid #111; outline-offset: -2px; z-index: 2; }
.handle { position: absolute; right: -3px; bottom: -3px; width: 5px; height: 5px; background: #111; }

.vscroll { width: 16px; background: #f0f0f0; display: flex; flex-direction: column; align-items: center; position: relative; }
.mark { width: 16px; height: 5px; background: #999; position: relative; flex: none; }
.mark::after { content: ""; position: absolute; left: 4px; top: 2px; width: 8px; height: 1px; background: #000; }
.arrow { margin-top: 6px; flex: none; }
.vthumb { width: 15px; height: 59px; background: #cdcdcd; margin-top: 5px; flex: none; }
.vdown { margin-top: auto; margin-bottom: 6px; }
.hscroll { height: 15px; background: #f0f0f0; display: flex; align-items: center; padding-left: 5px; flex: none; }
.hthumb { margin-left: 4px; width: 877px; height: 15px; background: #cdcdcd; }
.hright { margin-left: 947px; }
.hmark { margin-left: 4px; width: 5px; height: 15px; background: #999; position: relative; }
.hmark::after { content: ""; position: absolute; left: 2px; top: 3px; height: 9px; width: 1px; background: #000; }
.tabs { height: 23px; display: flex; align-items: center; padding-left: 4px; background: #f0f0f0; flex: none; }
.nav { width: 22px; display: flex; align-items: center; justify-content: center; gap: 1px; }
.bar { width: 1px; height: 12px; background: #999; }
.tri-l { border: 5px solid transparent; border-right: 5px solid #999; border-left: 0; }
.tri-r { border: 5px solid transparent; border-left: 5px solid #999; border-right: 0; }
.plus { font: 700 22px/22px "Liberation Sans", sans-serif; margin: 0 9px 0 8px; width: 20px; text-align: center; }
.tab { height: 23px; line-height: 22px; padding: 0 13px; font-size: 11.500px; }
.tab.sel { background: #fff; border-bottom: 3px solid #6e6e6e; padding: 0 14px; }

.side { width: 48px; background: #f0f0f0; border-left: 1px solid #a8a8a8; position: relative; display: flex; flex-direction: column; align-items: center; }
.kebab { height: 32px; font: 16px/32px "Liberation Sans", sans-serif; margin-left: 9px; }
.sb { width: 33px; height: 34px; display: flex; align-items: center; justify-content: center; margin-left: 9px; margin-bottom: 1px; flex: none; }
.sb .ic { width: 24px; height: 26px; }
.sb.on { background: #c5dff5; border: 1px solid #90c8f6; }
.fxs { font: italic 24px "Liberation Serif", serif; color: #1e8bcd; }
.grip { position: absolute; left: -1px; top: 408px; width: 7px; height: 73px; background: #666; }
.grip::after { content: ""; position: absolute; left: 1px; top: 31px; border: 4.500px solid transparent; border-left: 5px solid #eee; border-right: 0; }

.status { height: 22px; flex: none; border-top: 1px solid #b4b4b4; background: #f0f0f0; display: flex; font-size: 11.700px; }
.st { display: flex; align-items: center; height: 20px; margin-top: 1px; border-right: 1px solid #bbb; flex: none; }
.st1 { width: 264px; padding-left: 11px; }
.st1b { width: 398px; }
.st2 { width: 150px; padding-left: 9px; border: 0; }
.st3 { width: 416px; justify-content: center; }
.st4, .st5, .st6 { width: 30px; justify-content: center; }
.st7 { width: 411px; justify-content: center; }
.st8 { width: 144px; gap: 5px; padding-left: 9px; }
.st9 { flex: 1; border: 0; justify-content: center; }
.zm { font: 700 17px "Liberation Sans", sans-serif; color: #333; }
.slider { width: 98px; height: 1px; background: #777; position: relative; }
.slider i { position: absolute; left: 50px; top: -6px; width: 5px; height: 13px; background: #e0e0e0; border: 1px solid #666; }

.taskbar { height: 40px; background: #1c1c1c; display: flex; align-items: center; flex: none; padding-right: 18px; }
.tk { display: flex; align-items: center; justify-content: center; height: 40px; flex: none; }
.win { width: 48px; }
.search { width: 344px; height: 40px; background: #f0f0f0; display: flex; align-items: center; padding-left: 12px; gap: 9px; font-size: 14px; color: #333; flex: none; }
.t48 { width: 47px; }
.tapp { width: 49px; position: relative; }
.tapp.first { margin-left: 4px; }
.tapp.active { background: #3e3e3e; }
.tapp::after { content: ""; position: absolute; left: 3px; right: 3px; bottom: 0; height: 2px; background: #76b9ed; }
.spring { flex: 1; }
.tray { width: 24.500px; display: flex; justify-content: center; flex: none; }
.lang, .clock { display: flex; flex-direction: column; align-items: center; color: #ddd; font-size: 12px; line-height: 20px; flex: none; }
.lang { width: 28px; margin-left: 3px; }
.clock { width: 80px; margin-left: -1px; }
.notif { width: 30px; display: flex; justify-content: center; margin-left: 1px; flex: none; }

.dialog { position: absolute; left: 788px; top: 352px; width: 344px; height: 328px; background: #f0f0f0; border: 1px solid #8a8a8a; box-shadow: 0 2px 12px rgba(0,0,0,.35); display: flex; flex-direction: column; font-size: 12px; letter-spacing: -.12px; }
.dtitle { height: 29px; background: #fff; display: flex; align-items: center; justify-content: space-between; padding: 0 9px 0 8px; flex: none; }
.dbody { padding: 11px 8px 0 8px; flex: 1; display: flex; flex-direction: column; }
.chk { display: flex; align-items: center; gap: 5px; height: 19px; }
.list .chk { gap: 3px; }
.box { width: 13px; height: 13px; border: 1px solid #333; background: #fff; position: relative; flex: none; }
.box.on::after { content: ""; position: absolute; left: 3px; top: 0; width: 5px; height: 9px; border: solid #333; border-width: 0 1.500px 1.500px 0; transform: rotate(42deg); }
.top1 { height: 13px; white-space: nowrap; }
.fld { display: flex; align-items: center; margin-top: 7px; height: 21px; }
.fld span { width: 55px; text-align: right; flex: none; }
.inp { margin-left: 7px; width: 264px; height: 21px; background: #fff; border: 1px solid #b0b0b0; padding: 2px; }
.caret { width: 1px; height: 15px; background: #000; margin-left: 1px; }
.f2 { margin-top: 7px; }
.lbl { margin-top: 14px; height: 17px; }
.list { margin-top: 7px; width: 326px; height: 116px; background: #fff; border: 1px solid #a0a0a0; padding: 1px 0 0 1px; display: flex; flex-direction: column; flex: none; }
.btns { display: flex; margin-top: 22px; padding-left: 6px; gap: 8px; }
.btn { width: 83px; height: 28px; padding-top: 1px; background: #e1e1e1; border: 1px solid #adadad; display: flex; align-items: center; justify-content: center; }
.btn:first-child { margin-right: 49px; }
.def { border: 2px solid #0078d7; }
```
